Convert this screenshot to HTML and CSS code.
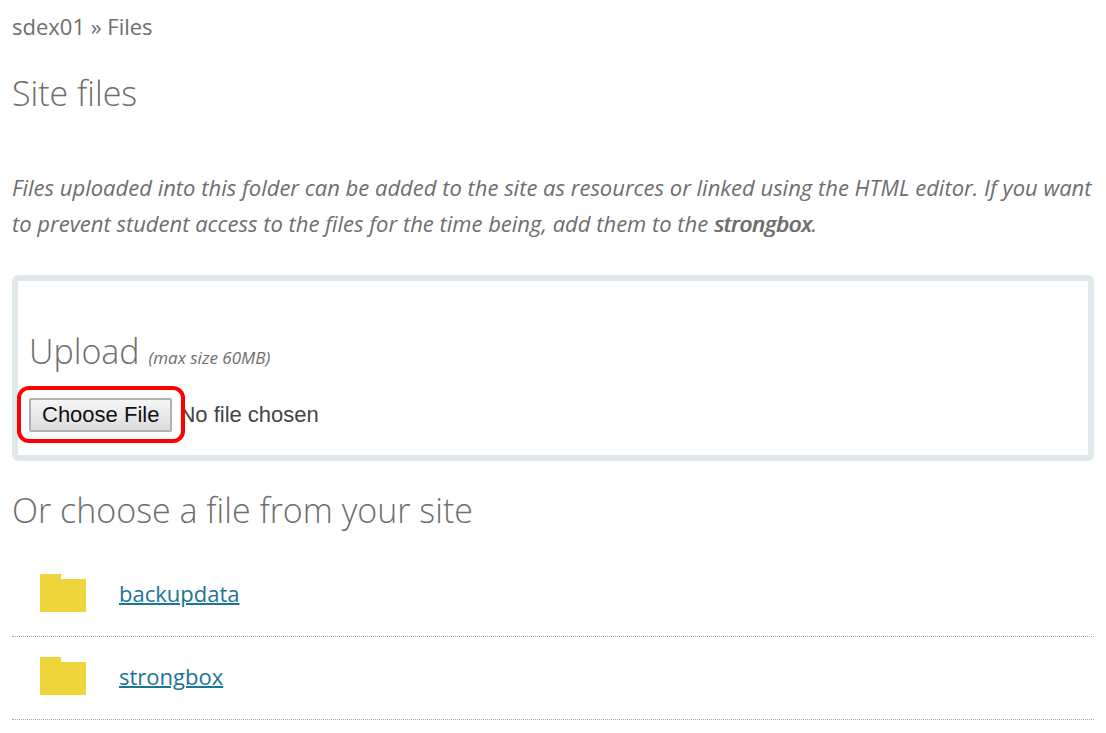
FILE: index.html
```
<!DOCTYPE html>
<html lang="en">
<head>
    <meta charset="UTF-8">
    <meta name="viewport" content="width=device-width, initial-scale=1.0">
    <title>Site files</title>
    <link rel="stylesheet" href="styles.css">
</head>
<body>
    <nav class="breadcrumb">sdex01 » Files</nav>
    <h1>Site files</h1>
    <p class="intro">Files uploaded into this folder can be added to the site as resources or linked using the HTML editor. If you want to prevent student access to the files for the time being, add them to the <strong>strongbox</strong>.</p>
    <form class="upload">
        <h2><label for="file">Upload</label> <small>(max size 60MB)</small></h2>
        <div class="picker">
            <input type="file" id="file" name="file">
            <span class="highlight"></span>
        </div>
    </form>
    <h2>Or choose a file from your site</h2>
    <ul class="files">
        <li>
            <svg class="folder" viewBox="0 0 46 38" aria-hidden="true"><path d="M0 0h21v5h25v33H0z"/></svg>
            <a href="#backupdata">backupdata</a>
        </li>
        <li>
            <svg class="folder" viewBox="0 0 46 38" aria-hidden="true"><path d="M0 0h21v5h25v33H0z"/></svg>
            <a href="#strongbox">strongbox</a>
        </li>
    </ul>
</body>
</html>
```

FILE: styles.css
```
body {
    margin: 0;
    padding: 8px 12px 12px;
    background-color: #fff;
    color: #6e6e6e;
    font-family: "Open Sans", sans-serif;
    font-size: 22px;
    line-height: 36px;
}
h1, h2 {
    margin: 0;
    font-size: 34px;
    font-weight: 300;
    line-height: 48px;
}
h1 {
    margin-top: 25px;
}
.intro {
    margin: 52px 0 34px;
    font-style: italic;
}
.intro strong {
    font-weight: 400;
    text-shadow: 1px 0 currentColor;
}
.upload {
    padding: 46px 11px 23px;
    margin-bottom: 25px;
    border: 6px solid #e0e8eb;
    border-radius: 6px;
}
.upload small {
    font-size: 17px;
    font-style: italic;
    font-weight: 400;
}
.picker {
    position: relative;
    display: flex;
    margin-top: 16px;
}
.picker input {
    color: #444;
    font-family: "Liberation Sans", Arial, sans-serif;
    font-size: 22px;
    line-height: 26px;
}
.picker input::file-selector-button {
    height: 34px;
    margin: 0 7px 0 0;
    padding: 0 11px;
    border: 2px solid #b0b0b0;
    border-radius: 2px;
    background: linear-gradient(#f6f6f6, #dcdcdc);
    color: #111;
    font: inherit;
}
.highlight {
    position: absolute;
    top: -12px;
    left: -12px;
    width: 160px;
    height: 49px;
    border: 4px solid #f00;
    border-radius: 12px;
    pointer-events: none;
}
.files {
    margin: 20px 0 0;
    padding: 0;
    list-style: none;
}
.files li {
    display: flex;
    align-items: center;
    gap: 33px;
    height: 78px;
    padding: 0 0 4px 28px;
    border-bottom: 1px dotted #aaa;
}
.folder {
    width: 46px;
    height: 38px;
    fill: #eed53c;
}
.files a {
    color: #1b7595;
    text-decoration-thickness: 2px;
}
```
